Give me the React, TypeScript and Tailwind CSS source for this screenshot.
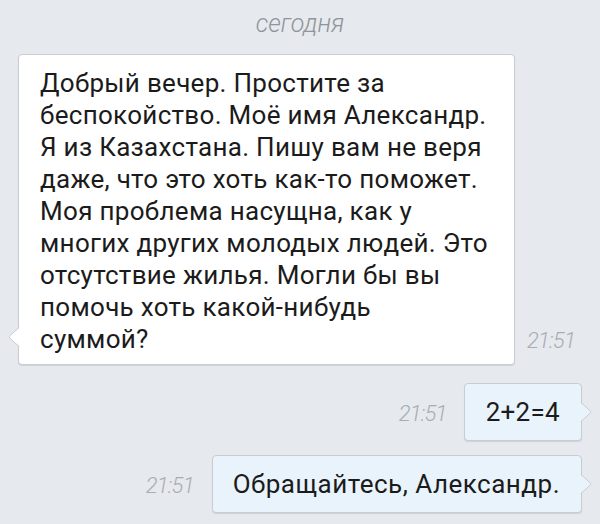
import React from 'react';

const Tail: React.FC<{ side: 'left' | 'right'; fill: string }> = ({ side, fill }) => {
  if (side === 'left') {
    return (
      <svg width="12" height="20" viewBox="0 0 12 20" className="absolute left-[-11px] bottom-[17px]">
        <path d="M12 0 L1.5 9.2 Q0.8 10 1.5 10.8 L12 20 Z" fill={fill} />
        <path d="M11.5 0 L1.5 9.2 Q0.8 10 1.5 10.8 L11.5 20" fill="none" stroke="#c9cdd2" strokeWidth="1" />
      </svg>
    );
  }
  return (
    <svg width="12" height="20" viewBox="0 0 12 20" className="absolute right-[-11px] top-[18px]">
      <path d="M0 0 L10.5 9.2 Q11.2 10 10.5 10.8 L0 20 Z" fill={fill} />
      <path d="M0.5 0 L10.5 9.2 Q11.2 10 10.5 10.8 L0.5 20" fill="none" stroke="#c9cdd2" strokeWidth="1" />
    </svg>
  );
};

const Time: React.FC<{ className?: string }> = ({ className }) => (
  <span className={`text-[22px] leading-none font-light italic text-[#a8adb3] tracking-[-0.8px] ${className ?? ''}`}>21:51</span>
);

const firstMessage = [
  'Добрый вечер. Простите за',
  'беспокойство. Моё имя Александр.',
  'Я из Казахстана. Пишу вам не веря',
  'даже, что это хоть как-то поможет.',
  'Моя проблема насущна, как у',
  'многих других молодых людей. Это',
  'отсутствие жилья. Могли бы вы',
  'помочь хоть какой-нибудь',
  'суммой?',
];

export default function App() {
  return (
    <div
      className="w-[600px] h-[524px] bg-[#e6e9ed] overflow-hidden text-[#1b1b1b]"
      style={{ fontFamily: 'Roboto, "Noto Sans", sans-serif' }}
    >
      <div className="pt-[9px] text-center text-[25px] leading-[29px] font-light italic text-[#8f959b]">сегодня</div>

      <div className="mt-[16px] flex items-end pl-[18px]">
        <div className="relative w-[497px] bg-white border border-[#c9cdd2] rounded-[4px] shadow-[0_1px_1px_rgba(0,0,0,0.1)] pl-[21px] pt-[12px] pb-[9px]">
          <div className="text-[26px] leading-[32px] tracking-[0.3px]">
            {firstMessage.map((line, i) => (
              <div key={i} className="whitespace-nowrap">{line}</div>
            ))}
          </div>
          <Tail side="left" fill="#ffffff" />
        </div>
        <Time className="ml-[12px] mb-[13px]" />
      </div>

      <div className="mt-[18px] flex items-center justify-end pr-[18px]">
        <Time className="mr-[17px] mt-[4px]" />
        <div className="relative bg-[#e9f3fb] border border-[#c9cdd2] rounded-[4px] shadow-[0_1px_1px_rgba(0,0,0,0.1)] px-[21px] py-[12px]">
          <div className="text-[26px] leading-[32px] tracking-[0.3px]">2+2=4</div>
          <Tail side="right" fill="#e9f3fb" />
        </div>
      </div>

      <div className="mt-[14px] flex items-center justify-end pr-[18px]">
        <Time className="mr-[18px] mt-[4px]" />
        <div className="relative bg-[#e9f3fb] border border-[#c9cdd2] rounded-[4px] shadow-[0_1px_1px_rgba(0,0,0,0.1)] pl-[20px] pr-[21px] py-[12px]">
          <div className="text-[26px] leading-[32px] tracking-[0.5px]">Обращайтесь, Александр.</div>
          <Tail side="right" fill="#e9f3fb" />
        </div>
      </div>
    </div>
  );
}
